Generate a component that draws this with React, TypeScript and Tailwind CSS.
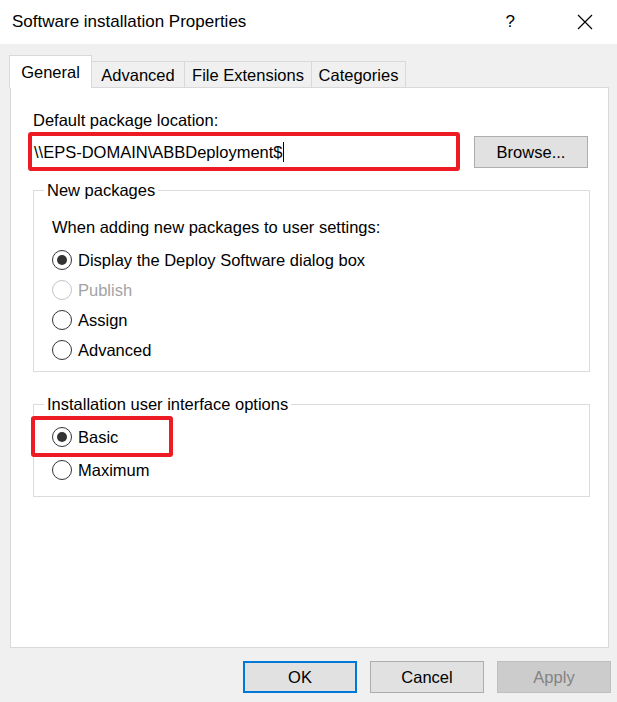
import React from "react";

const font = { fontFamily: '"Liberation Sans", Arial, sans-serif' };

type RadioProps = {
  label: string;
  checked?: boolean;
  disabled?: boolean;
};

const Radio: React.FC<RadioProps> = ({ label, checked, disabled }) => {
  return (
    <div className="flex h-[30px] items-center gap-[6px]">
      <span
        className={
          disabled
            ? "flex h-[20px] w-[20px] items-center justify-center rounded-full border border-[#c4c4c4] bg-white"
            : "flex h-[20px] w-[20px] items-center justify-center rounded-full border border-[#333333] bg-white"
        }
      >
        {checked && <span className="h-[10px] w-[10px] rounded-full bg-[#333333]" />}
      </span>
      <span className={disabled ? "text-[#a3a3a3]" : "text-black"}>{label}</span>
    </div>
  );
};

const App: React.FC = () => {
  return (
    <div
      className="flex h-[702px] w-[617px] flex-col bg-[#f0f0f0] text-[16.5px] leading-[20px] text-black"
      style={font}
    >
      {/* Title bar */}
      <div className="flex h-[44px] items-center bg-white pl-[12px]">
        <span className="text-[17px]">Software installation Properties</span>
        <span className="ml-auto mr-[62px] text-[17px]">?</span>
        <svg width="16" height="16" viewBox="0 0 16 16" className="mr-[24px]">
          <path d="M1 1 L15 15 M15 1 L1 15" stroke="#000" strokeWidth="1.2" />
        </svg>
      </div>

      <div className="flex flex-col pl-[10px] pr-[8px] pt-[11px]">
        {/* Tabs */}
        <div className="relative z-10 -mb-px flex h-[33px] items-end">
          <div className="-ml-px flex h-[33px] w-[83px] items-center justify-center border border-b-0 border-[#d9d9d9] bg-white">
            General
          </div>
          <div className="-ml-px flex h-[27px] w-[94px] items-center justify-center border border-[#d9d9d9] bg-[#f0f0f0]">
            Advanced
          </div>
          <div className="-ml-px flex h-[27px] w-[128px] items-center justify-center border border-[#d9d9d9] bg-[#f0f0f0]">
            File Extensions
          </div>
          <div className="-ml-px flex h-[27px] w-[95px] items-center justify-center border border-[#d9d9d9] bg-[#f0f0f0]">
            Categories
          </div>
        </div>

        {/* Tab panel */}
        <div className="flex h-[561px] flex-col border border-[#d9d9d9] bg-white pl-[17px] pr-[18px] pt-[22px]">
          <div className="ml-[5px]">Default package location:</div>

          <div className="mt-[2px] flex items-center gap-[14px]">
            <div className="flex h-[39px] w-[432px] items-center rounded-[3px] border-4 border-[#ed1c24] bg-white pl-[2px]">
              <span>\\EPS-DOMAIN\ABBDeployment$</span>
              <span className="h-[20px] w-px bg-black" />
            </div>
            <button className="h-[32px] w-[114px] border border-[#adadad] bg-[#e1e1e1]">
              Browse...
            </button>
          </div>

          {/* New packages */}
          <fieldset className="ml-[5px] mt-[9px] border border-[#dcdcdc] pb-[6px] pl-[18px]">
            <legend className="-ml-[8px] px-[3px]">New packages</legend>
            <div className="mt-[17px]">When adding new packages to user settings:</div>
            <div className="mt-[8px] flex flex-col">
              <Radio label="Display the Deploy Software dialog box" checked />
              <Radio label="Publish" disabled />
              <Radio label="Assign" />
              <Radio label="Advanced" />
            </div>
          </fieldset>

          {/* Installation user interface options */}
          <fieldset className="ml-[5px] mt-[22px] border border-[#dcdcdc] pb-[13px]">
            <legend className="ml-[10px] px-[3px]">Installation user interface options</legend>
            <div className="-ml-[3px] mt-[2px] flex h-[41px] w-[142px] items-center rounded-[3px] border-4 border-[#ed1c24] pl-[17px]">
              <Radio label="Basic" checked />
            </div>
            <div className="flex h-[26px] items-center pl-[18px]">
              <Radio label="Maximum" />
            </div>
          </fieldset>
        </div>

        {/* Buttons */}
        <div className="-mr-[2px] mt-[13px] flex justify-end gap-[13px]">
          <button className="h-[32px] w-[114px] border-2 border-[#0078d7] bg-[#e1e1e1]">OK</button>
          <button className="h-[32px] w-[114px] border border-[#adadad] bg-[#e1e1e1]">Cancel</button>
          <button className="h-[32px] w-[114px] border border-[#bfbfbf] bg-[#cccccc] text-[#838383]">
            Apply
          </button>
        </div>
      </div>
    </div>
  );
};

export default App;
